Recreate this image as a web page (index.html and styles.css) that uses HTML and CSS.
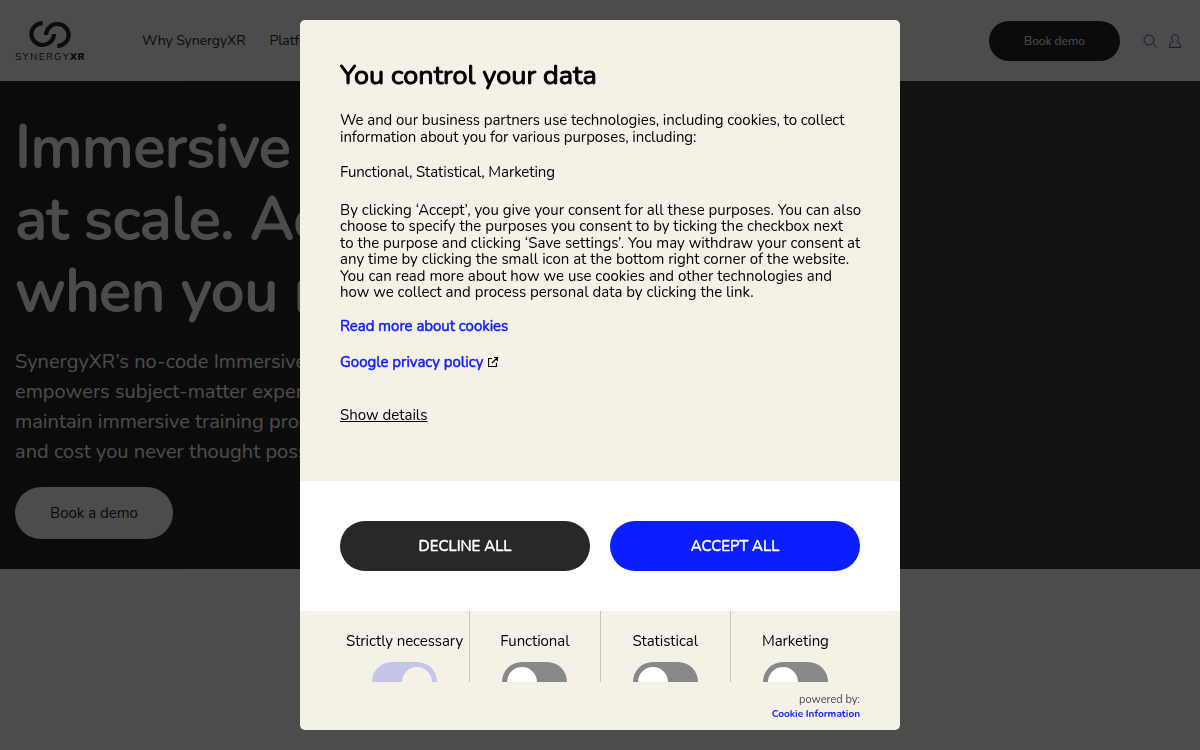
FILE: index.html
```html
<html>
<head>
    <meta charset="utf-8">
    <link rel="stylesheet" href="styles.css">
    <title>SynergyXR</title>
</head>
<body>
    <header class="header">
        <a class="logo" href="#">
            <svg width="42" height="27" viewBox="0 0 42 28" preserveAspectRatio="none" fill="none" stroke="#2b2b2b" stroke-width="4.2">
                <path d="M13.700 2.200A11.300 11.300 0 1 0 25 14.200V13.500"/>
                <path d="M28.300 25.800A11.300 11.300 0 1 0 17 13.800V14.500"/>
            </svg>
            <span class="logo-text">SYNERGY<b>XR</b></span>
        </a>
        <nav class="nav">
            <a href="#">Why SynergyXR</a>
            <a href="#">Platform</a>
        </nav>
        <a class="header-demo" href="#">Book demo</a>
        <svg class="header-icon" width="14" height="14" viewBox="0 0 14 14" fill="none" stroke="#4a40c0">
            <circle cx="6" cy="6" r="5"/>
            <path d="M9.600 9.600L13.500 13.500"/>
        </svg>
        <svg class="header-icon" width="12" height="14" viewBox="0 0 12 14" fill="none" stroke="#4a40c0">
            <path d="M4 7.400C1.600 5.500 2.200.6 6 .6S10.400 5.500 8 7.400C7.700 8.600 11.400 8.600 11.400 11V13.400H.6V11C.6 8.600 4.300 8.600 4 7.400Z"/>
        </svg>
    </header>

    <section class="hero">
        <h1>Immersive<br>at scale. Act<br>when you need</h1>
        <p>SynergyXR’s no-code Immersive<br>empowers subject-matter experts<br>maintain immersive training programs<br>and cost you never thought possible</p>
        <a class="hero-demo" href="#">Book a demo</a>
    </section>

    <!-- Cookie consent -->
    <div class="overlay">
        <div class="consent">
            <div class="consent-body">
                <h2>You control your data</h2>
                <p class="intro">We and our business partners use technologies, including cookies, to collect<br>information about you for various purposes, including:</p>
                <p class="purposes">Functional, Statistical, Marketing</p>
                <p class="terms">By clicking ‘Accept’, you give your consent for all these purposes. You can also<br>choose to specify the purposes you consent to by ticking the checkbox next<br>to the purpose and clicking ‘Save settings’. You may withdraw your consent at<br>any time by clicking the small icon at the bottom right corner of the website.<br>You can read more about how we use cookies and other technologies and<br>how we collect and process personal data by clicking the link.</p>
                <a class="link" href="#">Read more about cookies</a>
                <a class="link" href="#">Google privacy policy
                    <svg width="10" height="10" viewBox="0 0 10 10" fill="none" stroke="#000" stroke-width="1.2">
                        <path d="M4 1.500H.5V9.500H8.500V6M6 .5H9.500V4M9.500.5L4 6"/>
                    </svg>
                </a>
                <a class="details" href="#">Show details</a>
            </div>
            <div class="consent-buttons">
                <button class="decline">DECLINE ALL</button>
                <button class="accept">ACCEPT ALL</button>
            </div>
            <div class="toggles">
                <div class="toggle">Strictly necessary<span class="switch on"></span></div>
                <div class="toggle">Functional<span class="switch"></span></div>
                <div class="toggle">Statistical<span class="switch"></span></div>
                <div class="toggle">Marketing<span class="switch"></span></div>
            </div>
            <div class="powered">powered by:<a href="#">Cookie Information</a></div>
        </div>
    </div>
</body>
</html>
```
FILE: styles.css
```css
* {box-sizing: border-box;}
html, body {height: 100%; overflow: hidden;}
body {font-family: Nunito, Lato, sans-serif; font-size: 15px; margin: 0; background: #fff; color: #252525;}
a {color: inherit; text-decoration: none;}
h1, h2, p {margin: 0;}

.header {display: flex; align-items: center; height: 81px; padding: 0 19px 0 15px;}
.logo {display: flex; flex-direction: column; align-items: center; width: 70px; padding-top: 2px;}
.logo-text {margin-top: 3px; font-size: 10px; line-height: 12px; letter-spacing: 1.4px; white-space: nowrap;}
.logo-text b {font-weight: 900; letter-spacing: .4px;}
.nav {display: flex; gap: 24px; margin-left: 57px; font-size: 14px; letter-spacing: -.07px; white-space: nowrap;}
.header-demo {
    width: 131px;
    height: 40px;
    margin-left: auto;
    margin-right: 9px;
    border-radius: 20px;
    background: #252525;
    color: #fff;
    font-size: 12px;
    line-height: 40px;
    text-align: center;
}
.header-icon {margin-left: 12px;}
.header-demo + .header-icon {margin-left: 14px;}

.hero {
    height: 488px;
    padding: 30px 15px 0;
    background: linear-gradient(90deg, #252525 0, #252525 10%, #3e3e3e 75%);
    color: #fff;
    white-space: nowrap;
}
.hero h1 {font-size: 60px; line-height: 72px; font-weight: 600; letter-spacing: -.6px; word-spacing: .8px; -webkit-text-stroke: .8px #fff;}
.hero p {margin-top: 20px; font-size: 20px; line-height: 30px; letter-spacing: .04px;}
.hero-demo {
    display: block;
    width: 158px;
    height: 52px;
    margin-top: 20px;
    border-radius: 26px;
    background: #fff;
    color: #252525;
    line-height: 52px;
    text-align: center;
}

.overlay {
    position: fixed;
    top: 0;
    right: 0;
    bottom: 0;
    left: 0;
    display: flex;
    align-items: center;
    justify-content: center;
    background: rgba(0, 0, 0, .7);
}
.consent {
    display: flex;
    flex-direction: column;
    width: 600px;
    height: 710px;
    border-radius: 5px;
    overflow: hidden;
    background: #f6f1e7;
    color: #000;
    white-space: nowrap;
}
.consent-body {height: 461px; padding: 41px 40px 0;}
.consent h2 {font-size: 27px; line-height: 30px; font-weight: 400; -webkit-text-stroke: 1px #000;}
.intro {margin-top: 21px; line-height: 17px; letter-spacing: -.07px;}
.purposes {margin-top: 18px; line-height: 17px; letter-spacing: -.12px;}
.terms {margin-top: 20.6px; line-height: 16.5px;}
.link {
    display: block;
    margin-top: 16px;
    color: #0a1eff;
    line-height: 20px;
    letter-spacing: -.03px;
    -webkit-text-stroke: .5px #0a1eff;
}
.link svg {margin-left: 1px;}
.terms + .link {margin-top: 15.4px;}
.details {display: inline-block; margin-top: 33px; line-height: 20px; text-decoration: underline;}

.consent-buttons {display: flex; gap: 20px; height: 130px; padding: 40px; background: #fff;}
.consent-buttons button {
    flex: 1;
    height: 50px;
    padding: 0;
    border: 0;
    border-radius: 25px;
    color: #fff;
    font: inherit;
    -webkit-text-stroke: .5px #fff;
}
.decline {background: #282828;}
.accept {background: #0a1eff;}

.toggles {display: flex; height: 71px; padding: 0 40px; overflow: hidden;}
.toggle {
    display: flex;
    flex: none;
    flex-direction: column;
    align-items: center;
    width: 130.3px;
    padding-top: 20px;
    border-right: 1px solid #c8c4bc;
    line-height: 20px;
    letter-spacing: -.08px;
}
.toggle:last-child {width: 129px; border-right: 0;}
.switch {
    flex: none;
    width: 65px;
    height: 40px;
    margin-top: 11px;
    padding: 5px;
    border-radius: 20px;
    background: #888;
}
.switch:before {content: ""; display: block; width: 30px; height: 30px; border-radius: 50%; background: #fff;}
.switch.on {background: #c5c5ea;}
.switch.on:before {margin-left: auto; background: #f6f1e7;}

.powered {padding: 11px 40px 0; color: #444; font-size: 11px; line-height: 14px; text-align: right;}
.powered a {display: block; color: #0a1eff; font-size: 10px; font-weight: 700;}
```
